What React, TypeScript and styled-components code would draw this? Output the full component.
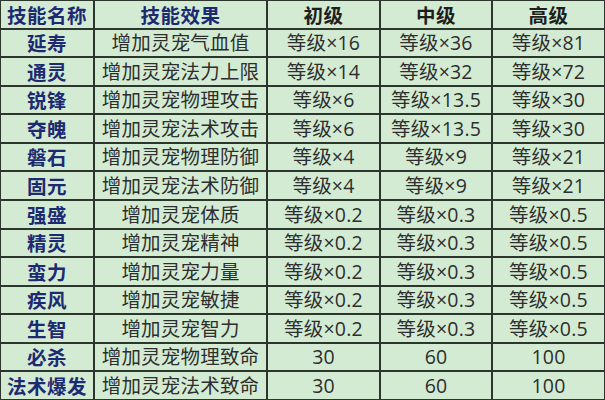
import React from "react";
import styled, { createGlobalStyle } from "styled-components";

const Global = createGlobalStyle`
  html, body { margin: 0; padding: 0; background: #ffffff; }
  body { font-family: "Noto Sans CJK SC", "Noto Sans", sans-serif; }
`;

const Table = styled.div`
  width: 605px;
  height: 400px;
  box-sizing: border-box;
  padding: 1px;
  display: grid;
  grid-template-columns: 92px 171px 111px 110px 111px;
  grid-template-rows: repeat(14, 1fr);
  gap: 2px;
  background: #2c362d;
`;

const Cell = styled.div<{ $kind?: "name" | "head" | "headBlue" | "body" }>`
  background: #d4ebd3;
  display: flex;
  align-items: center;
  justify-content: center;
  white-space: nowrap;
  font-family: ${(p) =>
    p.$kind === "body" ? `"Open Sans", "Noto Sans CJK SC", sans-serif` : `"Noto Sans CJK SC", sans-serif`};
  font-size: ${(p) => (p.$kind === "body" ? "19.5px" : "19.5px")};
  line-height: 1;
  font-weight: ${(p) => (p.$kind === "body" ? 400 : 700)};
  color: ${(p) =>
    p.$kind === "name" || p.$kind === "headBlue"
      ? "#1c2a72"
      : p.$kind === "head"
      ? "#1e1e1e"
      : "#2e2e2e"};
  letter-spacing: ${(p) => (p.$kind === "body" ? "0.2px" : "0.5px")};
`;

const rows: [string, string, string, string, string][] = [
  ["延寿", "增加灵宠气血值", "等级×16", "等级×36", "等级×81"],
  ["通灵", "增加灵宠法力上限", "等级×14", "等级×32", "等级×72"],
  ["锐锋", "增加灵宠物理攻击", "等级×6", "等级×13.5", "等级×30"],
  ["夺魄", "增加灵宠法术攻击", "等级×6", "等级×13.5", "等级×30"],
  ["磐石", "增加灵宠物理防御", "等级×4", "等级×9", "等级×21"],
  ["固元", "增加灵宠法术防御", "等级×4", "等级×9", "等级×21"],
  ["强盛", "增加灵宠体质", "等级×0.2", "等级×0.3", "等级×0.5"],
  ["精灵", "增加灵宠精神", "等级×0.2", "等级×0.3", "等级×0.5"],
  ["蛮力", "增加灵宠力量", "等级×0.2", "等级×0.3", "等级×0.5"],
  ["疾风", "增加灵宠敏捷", "等级×0.2", "等级×0.3", "等级×0.5"],
  ["生智", "增加灵宠智力", "等级×0.2", "等级×0.3", "等级×0.5"],
  ["必杀", "增加灵宠物理致命", "30", "60", "100"],
  ["法术爆发", "增加灵宠法术致命", "30", "60", "100"],
];

export default function App() {
  return (
    <>
      <Global />
      <Table>
        <Cell $kind="headBlue">技能名称</Cell>
        <Cell $kind="headBlue">技能效果</Cell>
        <Cell $kind="head">初级</Cell>
        <Cell $kind="head">中级</Cell>
        <Cell $kind="head">高级</Cell>
        {rows.map((r) => (
          <React.Fragment key={r[0]}>
            <Cell $kind="name">{r[0]}</Cell>
            <Cell $kind="body">{r[1]}</Cell>
            <Cell $kind="body">{r[2]}</Cell>
            <Cell $kind="body">{r[3]}</Cell>
            <Cell $kind="body">{r[4]}</Cell>
          </React.Fragment>
        ))}
      </Table>
    </>
  );
}
